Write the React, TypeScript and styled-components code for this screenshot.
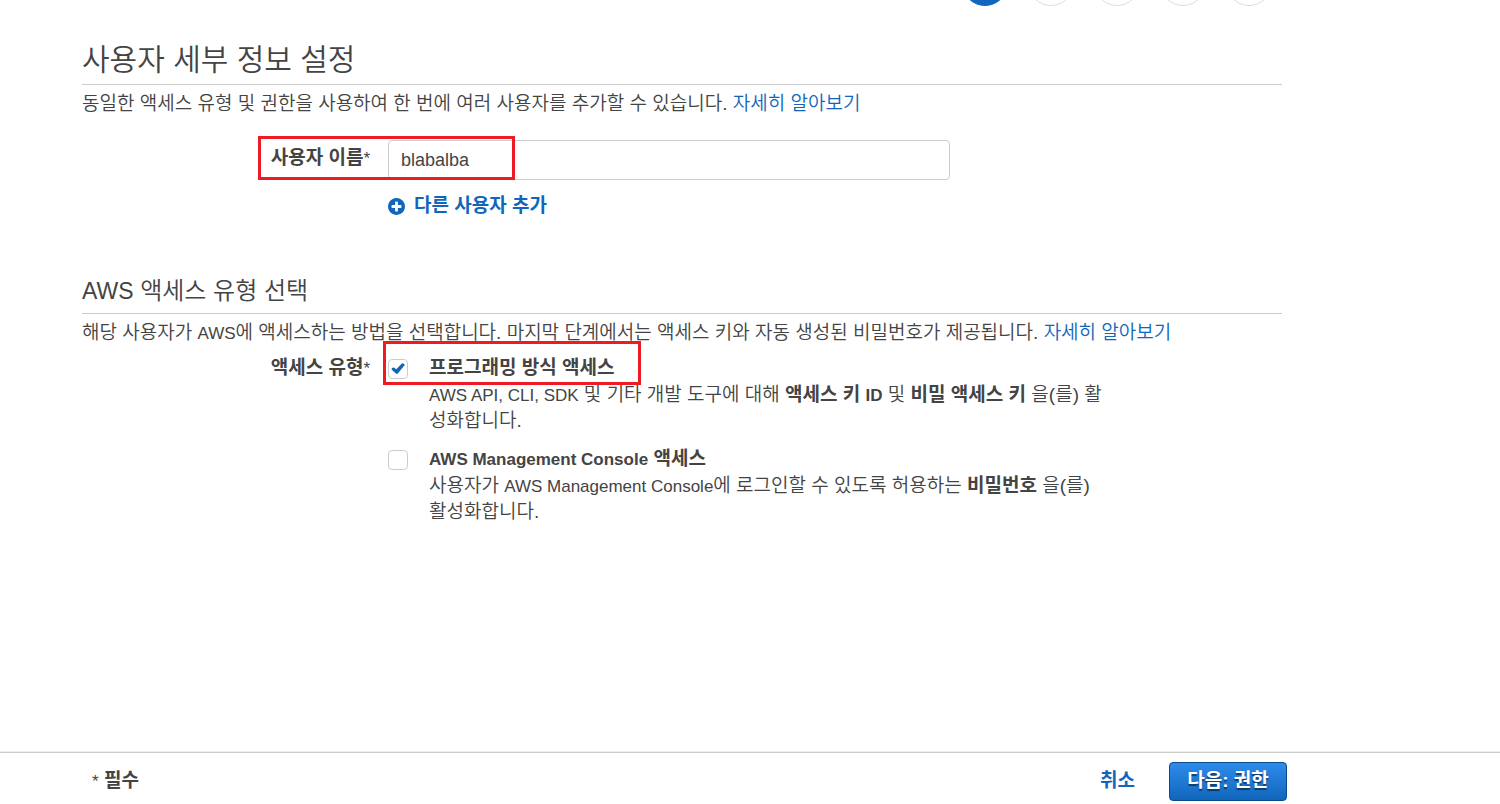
import React, { useState } from "react";
import styled, { createGlobalStyle } from "styled-components";

const GlobalStyle = createGlobalStyle`
  *, *::before, *::after { box-sizing: border-box; }
  body {
    margin: 0;
    background: #fff;
    color: #444;
    font-family: "Liberation Sans", "Noto Sans CJK KR", sans-serif;
    font-size: 19px;
    line-height: 26px;
  }
  h1, h2, p { margin: 0; }
`;

const Page = styled.div`
  display: flex;
  flex-direction: column;
  min-height: 100vh;
`;

const Main = styled.main`
  flex: 1;
  width: 80%;
  max-width: 1200px;
  margin-left: 82px;
`;

const Steps = styled.div`
  display: flex;
  justify-content: flex-end;
  align-items: flex-end;
  gap: 20px;
  height: 6px;
  padding-right: 10px;
  overflow: hidden;
`;

const Step = styled.span<{ $active?: boolean }>`
  flex: none;
  width: 46px;
  height: 46px;
  border-radius: 50%;
  border: 1px solid ${(p) => (p.$active ? "#1166bb" : "#ddd")};
  background: ${(p) => (p.$active ? "#1166bb" : "#fff")};
`;

const Title = styled.h1`
  padding: 34px 0 4px;
  border-bottom: 1px solid #ccc;
  font-size: 30px;
  line-height: 40px;
  font-weight: 350;
`;

const Subtitle = styled.h2`
  margin-top: 56px;
  padding-bottom: 6px;
  border-bottom: 1px solid #ccc;
  font-size: 24px;
  line-height: 32px;
  font-weight: 350;
`;

const Latin = styled.span<{ $size?: number }>`
  font-size: ${(p) => p.$size ?? 17}px;
  line-height: 1;
`;

const Text = styled.p`
  font-weight: 350;
  b { font-weight: 700; }
`;

const Lead = styled(Text)`
  margin-top: 6px;
`;

const Link = styled.a`
  color: #1166bb;
  text-decoration: none;
`;

const Row = styled.div`
  position: relative;
  display: grid;
  grid-template-columns: 288px minmax(0, 1fr);
  column-gap: 18px;
`;

const NameRow = styled(Row)`
  margin-top: 23px;
`;

const TypeRow = styled(Row)`
  margin-top: 9px;
`;

const Label = styled.label`
  padding-top: 5px;
  text-align: right;
  font-weight: 700;
`;

const GroupLabel = styled.div`
  text-align: right;
  font-weight: 700;
`;

const Star = styled.span`
  font-size: 17px;
  font-weight: 400;
  line-height: 1;
`;

const NameInput = styled.input`
  display: block;
  width: 100%;
  max-width: 562px;
  height: 40px;
  padding: 0 12px;
  border: 1px solid #ccc;
  border-radius: 4px;
  background: #fff;
  color: #444;
  font: 400 18px "Liberation Sans", "Noto Sans CJK KR", sans-serif;
  outline: none;
`;

const AddButton = styled.button`
  display: flex;
  align-items: center;
  gap: 9px;
  margin-top: 13px;
  padding: 0;
  border: 0;
  background: none;
  color: #1166bb;
  font: inherit;
  font-weight: 700;
  cursor: pointer;
`;

const Highlight = styled.span<{ $left: number; $top: number; $width: number }>`
  position: absolute;
  left: ${(p) => p.$left}px;
  top: ${(p) => p.$top}px;
  width: ${(p) => p.$width}px;
  height: 44px;
  border: 3px solid #ed1c24;
  pointer-events: none;
`;

const Options = styled.div`
  display: flex;
  flex-direction: column;
  gap: 12px;
  max-width: 716px;
`;

const Option = styled.div`
  display: grid;
  grid-template-columns: 20px minmax(0, 1fr);
  column-gap: 21px;
`;

const OptionLabel = styled.label`
  display: block;
  margin-bottom: 1px;
  font-weight: 700;
`;

const CheckWrap = styled.span`
  position: relative;
  width: 20px;
  height: 20px;
  margin-top: 4px;
  svg {
    position: absolute;
    left: 2px;
    top: 2px;
    pointer-events: none;
  }
`;

const CheckInput = styled.input`
  appearance: none;
  display: block;
  width: 20px;
  height: 20px;
  margin: 0;
  border: 1px solid #ccc;
  border-radius: 4px;
  background: #fff;
`;

const Footer = styled.footer`
  display: flex;
  align-items: flex-start;
  height: 53px;
  padding-top: 10px;
  border-top: 1px solid #eee;
  box-shadow: inset 0 1px #ccc;
`;

const FooterInner = styled.div`
  display: flex;
  align-items: center;
  width: 80%;
  max-width: 1195px;
  margin-left: 92px;
  height: 39px;
  padding-bottom: 2px;
`;

const Required = styled.strong`
  flex: 1;
`;

const Cancel = styled.button`
  margin-right: 34px;
  padding: 0;
  border: 0;
  background: none;
  color: #1166bb;
  font: inherit;
  font-weight: 700;
  cursor: pointer;
`;

const Next = styled.button`
  align-self: flex-start;
  flex: none;
  width: 118px;
  height: 39px;
  padding: 0 0 2px;
  border: 1px solid #0a4a8a;
  border-radius: 4px;
  background: linear-gradient(#2e8bea, #1166bb);
  color: #fff;
  font: inherit;
  font-weight: 700;
  text-shadow: 0 2px 1px rgba(0, 0, 0, 0.5);
  white-space: nowrap;
  cursor: pointer;
`;

function PlusCircle() {
  return (
    <svg width="17" height="17" viewBox="128 128 1536 1536" fill="currentColor" aria-hidden="true">
      <path d="M1344 960v-128q0-26-19-45t-45-19h-256v-256q0-26-19-45t-45-19h-128q-26 0-45 19t-19 45v256h-256q-26 0-45 19t-19 45v128q0 26 19 45t45 19h256v256q0 26 19 45t45 19h128q26 0 45-19t19-45v-256h256q26 0 45-19t19-45zm320-64q0 209-103 385.5t-279.5 279.5-385.5 103-385.5-103-279.5-279.5-103-385.5 103-385.5 279.5-279.5 385.5-103 385.5 103 279.5 279.5 103 385.5z" />
    </svg>
  );
}

function Checkbox({ id, initial = false }: { id: string; initial?: boolean }) {
  const [checked, setChecked] = useState(initial);
  return (
    <CheckWrap>
      <CheckInput id={id} type="checkbox" checked={checked} onChange={(e) => setChecked(e.target.checked)} />
      {checked && (
        <svg width="16" height="16" viewBox="0 0 16 16" fill="#1166bb" aria-hidden="true">
          <path d="M2 7.2Q3 6.2 4.3 6.8L6.3 8.2L11.6 2.7Q12.3 2 13.2 2.4L14.3 3Q15 3.6 14.4 4.4L8 12.2Q6.8 13.4 5.6 12.2L1.8 8.8Q1 8 2 7.2Z" />
        </svg>
      )}
    </CheckWrap>
  );
}

export default function App() {
  const [name, setName] = useState("blabalba");
  return (
    <Page>
      <GlobalStyle />
      <Main>
        <Steps>
          <Step $active />
          <Step />
          <Step />
          <Step />
          <Step />
        </Steps>

        <Title>사용자 세부 정보 설정</Title>
        <Lead>
          동일한 액세스 유형 및 권한을 사용하여 한 번에 여러 사용자를 추가할 수 있습니다. <Link href="#users">자세히 알아보기</Link>
        </Lead>
        <NameRow>
          <Label htmlFor="user-name">
            사용자 이름<Star>*</Star>
          </Label>
          <div>
            <NameInput id="user-name" type="text" value={name} onChange={(e) => setName(e.target.value)} />
            <AddButton type="button">
              <PlusCircle />
              다른 사용자 추가
            </AddButton>
          </div>
          <Highlight $left={176} $top={-4} $width={257} />
        </NameRow>

        <Subtitle>
          <Latin $size={23}>AWS</Latin> 액세스 유형 선택
        </Subtitle>
        <Lead>
          해당 사용자가 <Latin>AWS</Latin>에 액세스하는 방법을 선택합니다. 마지막 단계에서는 액세스 키와 자동 생성된 비밀번호가 제공됩니다.{" "}
          <Link href="#access">자세히 알아보기</Link>
        </Lead>
        <TypeRow>
          <GroupLabel id="access-type">
            액세스 유형<Star>*</Star>
          </GroupLabel>
          <Options role="group" aria-labelledby="access-type">
            <Option>
              <Checkbox id="programmatic" initial />
              <div>
                <OptionLabel htmlFor="programmatic">프로그래밍 방식 액세스</OptionLabel>
                <Text>
                  <Latin>AWS API, CLI, SDK</Latin> 및 기타 개발 도구에 대해{" "}
                  <b>
                    액세스 키 <Latin>ID</Latin>
                  </b>{" "}
                  및 <b>비밀 액세스 키</b> 을(를) 활성화합니다.
                </Text>
              </div>
            </Option>
            <Option>
              <Checkbox id="console" />
              <div>
                <OptionLabel htmlFor="console">
                  <Latin>AWS Management Console</Latin> 액세스
                </OptionLabel>
                <Text>
                  사용자가 <Latin>AWS Management Console</Latin>에 로그인할 수 있도록 허용하는 <b>비밀번호</b> 을(를)
                  활성화합니다.
                </Text>
              </div>
            </Option>
          </Options>
          <Highlight $left={301} $top={-14} $width={258} />
        </TypeRow>
      </Main>

      <Footer>
        <FooterInner>
          <Required>
            <Star>*</Star> 필수
          </Required>
          <Cancel type="button">취소</Cancel>
          <Next type="button">다음: 권한</Next>
        </FooterInner>
      </Footer>
    </Page>
  );
}
